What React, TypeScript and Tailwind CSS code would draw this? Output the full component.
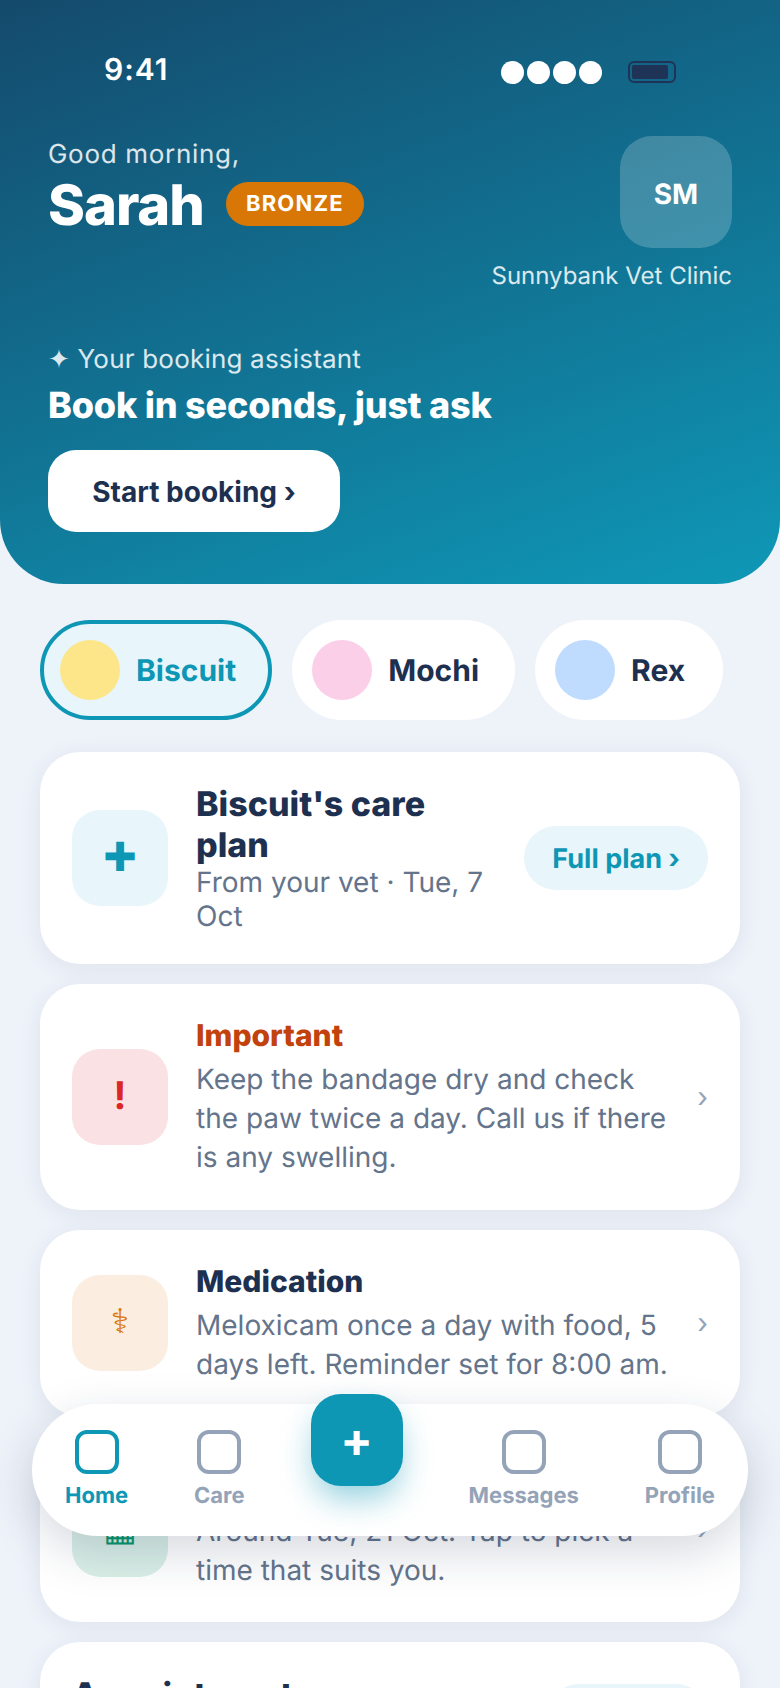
import React from "react";

function Chevron() {
  return <span className="shrink-0 text-[28px] leading-none text-[#94a3b8]">›</span>;
}

function InfoCard({ glyph, glyphClass, boxClass, title, titleClass = "text-[#1e3050]", body }: { glyph: string; glyphClass: string; boxClass: string; title: string; titleClass?: string; body: React.ReactNode }) {
  return (
    <div className="flex items-center gap-[28px] rounded-[40px] bg-white p-[32px] shadow-[0_4px_24px_rgba(30,47,80,0.07)]">
      <div className={`flex h-[96px] w-[96px] shrink-0 items-center justify-center rounded-[28px] ${boxClass}`}>
        <span className={glyphClass}>{glyph}</span>
      </div>
      <div className="min-w-0 flex-1">
        <div className={`pt-[2px] text-[30px] font-extrabold leading-[36px] ${titleClass}`}>{title}</div>
        <div className="mt-[6px] text-[28px] leading-[39.2px] text-[#64748b]">{body}</div>
      </div>
      <Chevron />
    </div>
  );
}

function PetChip({ name, dot, chipClass, textClass }: { name: string; dot: string; chipClass: string; textClass: string }) {
  return (
    <div className={`flex h-[100px] items-center gap-[16px] rounded-full ${chipClass}`}>
      <div className={`h-[60px] w-[60px] rounded-full ${dot}`} />
      <span className={`pt-[2px] text-[30px] font-bold ${textClass}`}>{name}</span>
    </div>
  );
}

function NavItem({ label, active }: { label: string; active?: boolean }) {
  return (
    <div className="flex flex-col items-center gap-[8px]">
      <div className={`h-[44px] w-[44px] rounded-[12px] border-[4px] ${active ? "border-[#0e96b5]" : "border-[#94a3b8]"}`} />
      <span className={`text-[22px] font-bold leading-[28px] ${active ? "text-[#0e96b5]" : "text-[#94a3b8]"}`}>{label}</span>
    </div>
  );
}

export default function App() {
  return (
    <div className="relative h-[1688px] w-[780px] overflow-hidden bg-[#eef2f9] font-['Inter',sans-serif] [text-rendering:geometricPrecision]">
      <header className="h-[584px] rounded-b-[64px] bg-[linear-gradient(160deg,#144a6c,#0f98b7)] px-[48px] pt-[50px] text-white">
        <div className="flex h-[44px] items-center justify-between px-[56px]">
          <span className="mb-[4px] text-[30px] font-semibold tracking-[1px]">9:41</span>
          <div className="flex items-center gap-[26px]">
            <div className="flex gap-[3px]">
              <div className="h-[23px] w-[23px] rounded-full bg-white" />
              <div className="h-[23px] w-[23px] rounded-full bg-white" />
              <div className="h-[23px] w-[23px] rounded-full bg-white" />
              <div className="h-[23px] w-[23px] rounded-full bg-white" />
            </div>
            <div className="h-[22px] w-[48px] rounded-[6px] border-[2px] border-[#1e3355] p-[2px]">
              <div className="h-full w-[36px] rounded-[2px] bg-[#1e3355]" />
            </div>
          </div>
        </div>
        <div className="mt-[42px] flex items-start justify-between">
          <div className="pt-[1px]">
            <div className="text-[26px] leading-[36px] tracking-[0.7px] text-white/85">Good morning,</div>
            <div className="flex items-center gap-[22px]">
              <span className="text-[56px] font-extrabold leading-[64px] tracking-[-1px]">Sarah</span>
              <span className="mb-[2px] flex h-[44px] items-center rounded-full bg-[#d97706] px-[20px] text-[22px] font-bold tracking-[1.2px]">BRONZE</span>
            </div>
          </div>
          <div className="flex flex-col items-end">
            <div className="flex h-[112px] w-[112px] items-center justify-center rounded-[32px] bg-white/20 pt-[3px] text-[28px] font-bold">SM</div>
            <div className="mt-[12px] text-[24px] leading-[32px] text-white/85">Sunnybank Vet Clinic</div>
          </div>
        </div>
        <div className="mt-[50px] text-[26px] leading-[36px] tracking-[0.2px] text-white/85">✦ Your booking assistant</div>
        <div className="mt-[2px] text-[36px] font-extrabold leading-[50px] tracking-[-0.2px]">Book in seconds, just ask</div>
        <button className="mt-[20px] h-[82px] w-[292px] rounded-[28px] bg-white pt-[2px] text-[28px] font-bold text-[#1e3050]">Start booking ›</button>
      </header>

      <main className="px-[40px] pt-[36px]">
        <div className="flex gap-[20px]">
          <PetChip name="Biscuit" dot="bg-[#fde68a]" chipClass="border-[4px] border-[#0e96b5] bg-[#e8f6fb] pl-[16px] pr-[32px]" textClass="text-[#0e96b5]" />
          <PetChip name="Mochi" dot="bg-[#fbcfe8]" chipClass="bg-white pl-[20px] pr-[36px]" textClass="text-[#1e3050]" />
          <PetChip name="Rex" dot="bg-[#bfdbfe]" chipClass="bg-white pl-[20px] pr-[38px]" textClass="text-[#1e3050]" />
        </div>

        <div className="mt-[32px] flex flex-col gap-[20px]">
          <div className="flex items-center gap-[28px] rounded-[40px] bg-white p-[32px] shadow-[0_4px_24px_rgba(30,47,80,0.07)]">
            <div className="flex h-[96px] w-[96px] shrink-0 items-center justify-center rounded-[28px] bg-[#e8f6fb]">
              <span className="font-['DejaVu_Sans'] text-[40px] leading-none text-[#0e96b5]">✚</span>
            </div>
            <div className="min-w-0 flex-1 translate-y-[1px]">
              <div className="text-[34px] font-extrabold leading-[40.5px] text-[#1e3050]">Biscuit's care plan</div>
              <div className="text-[28px] leading-[33.5px] text-[#64748b]">From your vet · Tue, 7 Oct</div>
            </div>
            <div className="flex h-[64px] shrink-0 items-center rounded-full bg-[#e8f6fb] px-[28px] pt-[2px] text-[27px] font-bold text-[#0e96b5]">Full plan ›</div>
          </div>

          <InfoCard glyph="!" glyphClass="text-[38px] font-bold text-[#dc2626]" boxClass="bg-[#fae1e3]" title="Important" titleClass="text-[#c2410c]" body="Keep the bandage dry and check the paw twice a day. Call us if there is any swelling." />
          <InfoCard glyph="⚕" glyphClass="font-['DejaVu_Sans'] text-[34px] text-[#d97706]" boxClass="bg-[#fbeee0]" title="Medication" body="Meloxicam once a day with food, 5 days left. Reminder set for 8:00 am." />
          <InfoCard glyph="▦" glyphClass="font-['DejaVu_Sans'] text-[36px] text-[#059669]" boxClass="bg-[#d9efe7]" title="Next check-up" body="Around Tue, 21 Oct. Tap to pick a time that suits you." />

          <div className="flex items-start justify-between rounded-[40px] bg-white p-[32px] shadow-[0_4px_24px_rgba(30,47,80,0.07)]">
            <div className="pt-[2px] text-[34px] font-extrabold leading-[40px] text-[#1e3050]">Appointments</div>
            <div className="mt-[10px] flex h-[64px] items-center rounded-full bg-[#e8f6fb] px-[28px] text-[27px] font-bold text-[#0e96b5]">See all ›</div>
          </div>
        </div>
      </main>

      <nav className="absolute bottom-[152px] left-[32px] flex h-[132px] w-[716px] items-center justify-around rounded-[66px] bg-white shadow-[0_16px_48px_rgba(30,47,80,0.18)]">
        <NavItem label="Home" active />
        <NavItem label="Care" />
        <div className="mb-[60px] flex h-[92px] w-[92px] items-center justify-center rounded-[30px] bg-[#0e96b5] text-[48px] font-bold leading-none text-white shadow-[0_16px_32px_-4px_rgba(14,150,181,0.45)]">+</div>
        <NavItem label="Messages" />
        <NavItem label="Profile" />
      </nav>
    </div>
  );
}
